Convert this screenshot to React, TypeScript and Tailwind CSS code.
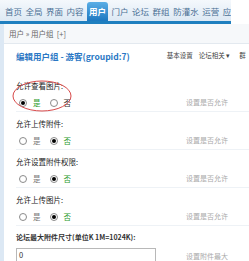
import React from "react";

const navItems = ["首页", "全局", "界面", "内容", "用户", "门户", "论坛", "群组", "防灌水", "运营", "应用"];

type Row = { label: string; yes: boolean; hint: string };

const rows: Row[] = [
  { label: "允许查看图片:", yes: true, hint: "设置是否允许" },
  { label: "允许上传附件:", yes: false, hint: "设置是否允许" },
  { label: "允许设置附件权限:", yes: false, hint: "设置是否允许" },
  { label: "允许上传图片:", yes: false, hint: "设置是否允许" },
];

const Radio = ({ on }: { on: boolean }) => (
  <span className="inline-flex h-[8px] w-[8px] shrink-0 items-center justify-center rounded-full border border-[#8a8a8a] bg-white">
    {on && <span className="h-[4px] w-[4px] rounded-full bg-black" />}
  </span>
);

const App = () => {
  return (
    <div
      className="relative h-[261px] w-[249px] overflow-hidden bg-white text-[8px]"
      style={{ fontFamily: '"Noto Sans CJK SC", "Liberation Sans", sans-serif' }}
    >
      {/* top nav */}
      <div className="h-[24px] w-[231px] overflow-hidden border-b-[3px] border-[#1f7fbf] bg-gradient-to-b from-[#f4f8fc] to-[#dde9f4]">
        <div className="flex h-full items-end gap-[3.5px] pl-[5px] text-[8.5px]">
          {navItems.map((n) =>
            n === "用户" ? (
              <span
                key={n}
                className="flex h-[19px] shrink-0 items-center rounded-t-[3px] bg-gradient-to-b from-[#5aaee6] to-[#1b78c0] px-[2px] font-bold text-white"
              >
                {n}
              </span>
            ) : (
              <span key={n} className="flex h-[19px] shrink-0 items-center whitespace-nowrap text-[#4a6f94]">
                {n}
              </span>
            )
          )}
        </div>
      </div>

      <div className="flex">
        <div className="w-[4px] shrink-0 bg-[#dce8f4]" />
        <div className="min-w-0 flex-1">
          {/* breadcrumb */}
          <div className="flex h-[20px] items-center border-b border-[#e3e9ef] bg-[#f6f8fa] pl-[5px] text-[7.5px] text-[#666]">
            用户 » 用户组 &nbsp;[+]
          </div>

          {/* title */}
          <div className="flex h-[24px] items-center whitespace-nowrap pl-[12px]">
            <span className="text-[8.5px] font-bold text-[#2a77c4]">编辑用户组 - 游客(groupid:7)</span>
            <span className="ml-[37px] text-[6.5px] text-[#444]">基本设置</span>
            <span className="ml-[6px] text-[6.5px] text-[#444]">论坛相关 ▾</span>
            <span className="ml-[9px] text-[6.5px] text-[#444]">群</span>
          </div>

          <div className="pl-[12px] pt-[10px]">
            {rows.map((r) => (
              <div key={r.label} className="mb-[4px]">
                <div className="flex h-[16px] items-center text-[7.5px] text-[#222]">{r.label}</div>
                <div className="flex h-[18px] items-center border-b border-[#eef2f6]">
                  <div className="flex w-[170px] items-center gap-[6px] pl-[3px] text-[7.5px]">
                    <Radio on={r.yes} />
                    <span className={r.yes ? "text-[#2c9a2c]" : "text-[#777]"}>是</span>
                    <span className="ml-[3px] flex">
                      <Radio on={!r.yes} />
                    </span>
                    <span className={!r.yes ? "text-[#2c9a2c]" : "text-[#333]"}>否</span>
                  </div>
                  <span className="text-[7px] text-[#aaa]">{r.hint}</span>
                </div>
              </div>
            ))}

            <div className="flex h-[14px] items-center whitespace-nowrap text-[7px] font-bold text-[#333]">
              论坛最大附件尺寸(单位K 1M=1024K):
            </div>
            <div className="mt-[4px] flex items-start">
              <div className="h-[14px] w-[140px] border border-[#b8b8b8] pl-[2px] text-[7.5px] leading-[12px] text-[#333]">
                0
              </div>
              <span className="ml-[30px] mt-[3px] text-[7px] text-[#aaa]">设置附件最大</span>
            </div>
          </div>
        </div>
      </div>

      {/* red annotation ellipse */}
      <svg className="pointer-events-none absolute left-0 top-0" width="249" height="261">
        <ellipse cx="42" cy="96" rx="29" ry="15" fill="none" stroke="#d84848" strokeWidth="1" />
      </svg>
    </div>
  );
};

export default App;
